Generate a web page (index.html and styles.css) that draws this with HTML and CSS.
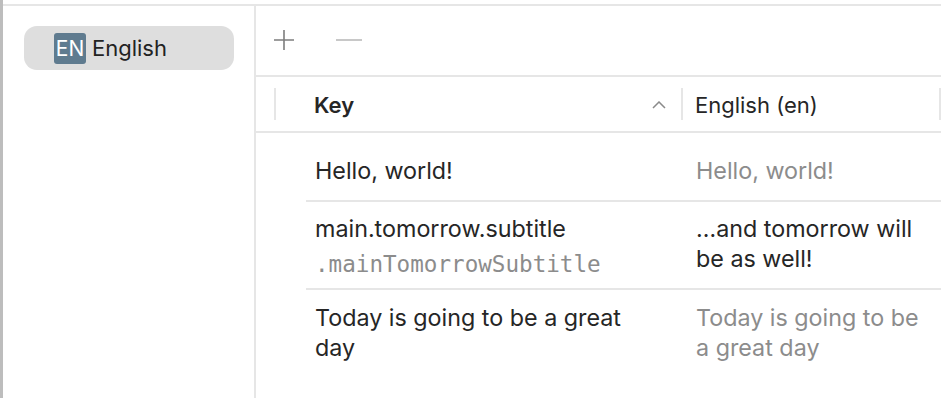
FILE: index.html
```html
<!DOCTYPE html>
<html>
<head>
<title>Localizations</title>
<link rel="stylesheet" href="styles.css">
</head>
<body>
<div class="window">
<div class="app">
<aside class="sidebar">
<div class="lang-pill">
<span class="lang-badge">EN</span>
<span class="lang-name">English</span>
</div>
</aside>
<main class="main">
<div class="toolbar">
<button class="tool-btn" title="Add">
<svg width="22" height="22" viewBox="0 0 22 22"><path d="M11 1v20M1 11h20" stroke="#7d7d7d" stroke-width="1.6" fill="none"/></svg>
</button>
<button class="tool-btn minus" title="Remove" disabled>
<svg width="28" height="22" viewBox="0 0 28 22"><path d="M1 11h26" stroke="#c2c2c2" stroke-width="1.8" fill="none"/></svg>
</button>
</div>
<div class="table-head">
<div class="head-gutter"></div>
<div class="head-cell head-key">
<span>Key</span>
<svg class="sort-icon" width="14" height="8" viewBox="0 0 14 8"><path d="M1 7l6-6 6 6" stroke="#8a8a8a" stroke-width="1.5" fill="none"/></svg>
</div>
<div class="head-cell head-lang">English (en)</div>
</div>
<div class="rows">
<div class="row first">
<div class="cell cell-key">Hello, world!</div>
<div class="cell cell-value muted">Hello, world!</div>
</div>
<div class="row middle">
<div class="cell cell-key">main.tomorrow.subtitle<div class="symbol">.mainTomorrowSubtitle</div></div>
<div class="cell cell-value">…and tomorrow will be as well!</div>
</div>
<div class="row last">
<div class="cell cell-key">Today is going to be a great day</div>
<div class="cell cell-value muted">Today is going to be a great day</div>
</div>
</div>
</main>
</div>
</div>
</body>
</html>
```

FILE: styles.css
```css
body {
margin: 0;
padding: 0;
background-color: #fff;
font-family: Inter, "Noto Sans", sans-serif;
color: #262626;
}
.window {
width: 941px;
height: 398px;
border-left: 3px solid #bdbdbd;
padding-top: 4px;
box-sizing: border-box;
overflow: hidden;
}
.app {
display: flex;
height: 100%;
border-top: 2px solid #e6e6e6;
}
.sidebar {
width: 253px;
flex-shrink: 0;
border-right: 2px solid #e6e6e6;
padding: 20px 0 0 21px;
box-sizing: border-box;
}
.lang-pill {
width: 210px;
height: 44px;
background-color: #dedede;
border-radius: 13px;
display: flex;
align-items: center;
padding-left: 30px;
box-sizing: border-box;
}
.lang-badge {
width: 32px;
height: 31px;
border-radius: 3px;
background-color: #5f7b8f;
color: #fff;
font-size: 21px;
display: flex;
align-items: center;
justify-content: center;
margin-right: 6px;
}
.lang-name {
font-size: 22px;
color: #222;
}
.main {
flex: 1;
display: flex;
flex-direction: column;
}
.toolbar {
height: 71px;
border-bottom: 2px solid #e6e6e6;
display: flex;
align-items: center;
padding-left: 17px;
gap: 40px;
box-sizing: border-box;
}
.tool-btn {
background: none;
border: none;
padding: 0;
display: flex;
margin-top: -1px;
}
.table-head {
height: 56px;
border-bottom: 2px solid #e6e6e6;
display: flex;
align-items: center;
box-sizing: border-box;
}
.head-gutter {
width: 18px;
}
.head-cell {
height: 32px;
border-left: 2px solid #e6e6e6;
display: flex;
align-items: center;
font-size: 22px;
padding-top: 2px;
box-sizing: border-box;
}
.head-key {
width: 407px;
padding-left: 38px;
padding-right: 15px;
font-weight: 600;
justify-content: space-between;
}
.head-lang {
width: 260px;
padding-left: 12px;
border-right: 2px solid #e6e6e6;
}
.rows {
margin-left: 50px;
}
.row {
display: flex;
border-bottom: 2px solid #e6e6e6;
font-size: 23.3px;
line-height: 30px;
}
.row.first {
padding: 23px 0 14px;
}
.row.middle {
padding: 12px 0 4px;
}
.row.last {
border-bottom: none;
padding-top: 13px;
}
.cell-key {
width: 376px;
padding-left: 9px;
padding-right: 47px;
box-sizing: border-box;
}
.cell-value {
width: 259px;
padding-left: 14px;
padding-right: 12px;
box-sizing: border-box;
}
.symbol {
font-family: "DejaVu Sans Mono", monospace;
font-size: 22.6px;
color: #8c8c8c;
line-height: 40px;
}
.muted {
color: #8c8c8c;
}
```
